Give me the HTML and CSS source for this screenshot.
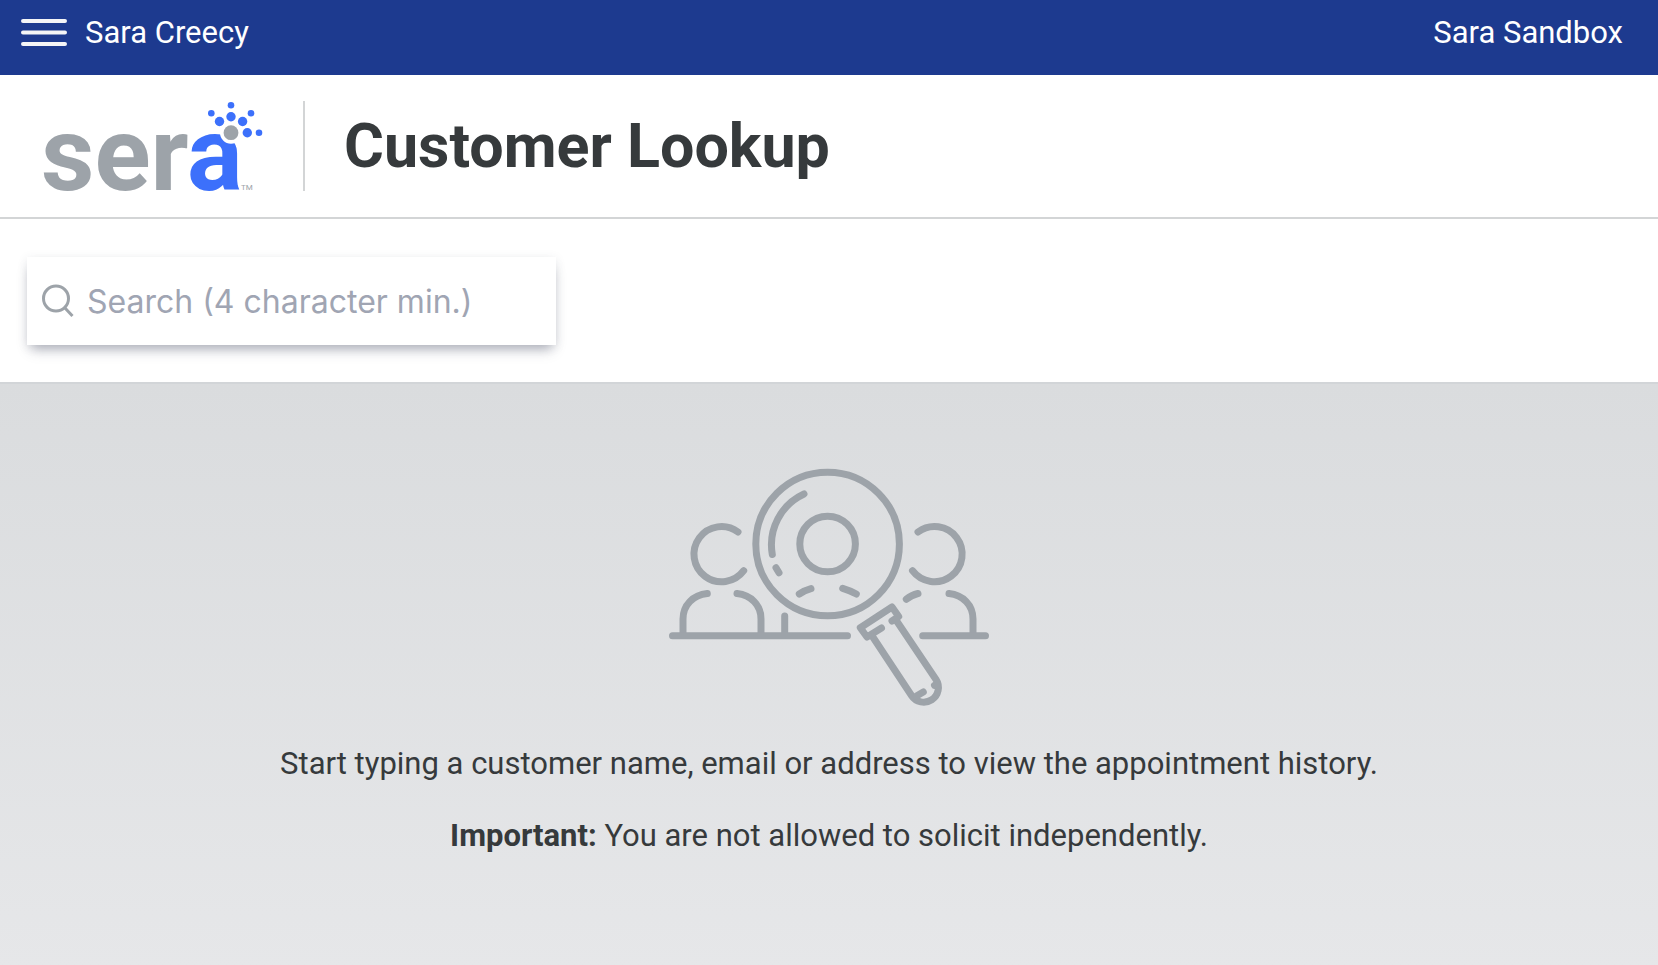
FILE: index.html
```
<!DOCTYPE html>
<html lang="en">

<head>
    <meta charset="UTF-8">
    <meta name="viewport" content="width=device-width, initial-scale=1.0">
    <title>Customer Lookup</title>
    <link rel="stylesheet" href="styles.css">
</head>

<body>
    <nav class="topbar">
        <button class="menu-btn" type="button" aria-label="Menu">
            <svg width="48" height="30" viewBox="0 0 48 30">
                <path d="M3 3H45M3 14.5H45M3 26H45" />
            </svg>
        </button>
        <span class="user">Sara Creecy</span>
        <span class="company">Sara Sandbox</span>
    </nav>

    <header class="page-header">
        <svg class="logo" width="224" height="92" viewBox="42 100 224 92" role="img" aria-label="sera">
            <text class="logo-text" x="41" y="190">ser<tspan class="logo-blue">a</tspan></text>
            <text class="logo-tm" x="241" y="190">TM</text>
            <circle class="ring" cx="231" cy="132.7" r="11" />
            <circle class="dot-grey" cx="231" cy="132.7" r="7.4" />
            <g class="dots">
                <circle cx="231" cy="116.8" r="4.7" />
                <circle cx="219.5" cy="121.5" r="4.7" />
                <circle cx="242.6" cy="121.5" r="4.7" />
                <circle cx="247.3" cy="132.7" r="4.7" />
                <circle cx="231" cy="105.3" r="3.3" />
                <circle cx="211.3" cy="113.3" r="3.3" />
                <circle cx="251" cy="113.3" r="3.3" />
                <circle cx="259" cy="132.7" r="3.3" />
            </g>
        </svg>
        <h1 class="title">Customer Lookup</h1>
    </header>

    <form class="search-section">
        <label class="search-box">
            <svg class="search-icon" width="32" height="34" viewBox="0 0 32 34" aria-hidden="true">
                <circle cx="14" cy="14.5" r="12.5" />
                <path d="M22.5 23.5L30.5 32" />
            </svg>
            <input class="search-input" type="text" aria-label="Search" placeholder="Search (4 character min.)">
        </label>
    </form>

    <main class="results">
        <svg class="lookup-art" width="320" height="244" viewBox="669 464 320 244" aria-hidden="true">
            <!-- person on the left -->
            <path d="M738 531A27.6 27.6 0 1 0 743.7 569.7" />
            <path d="M707.3 592.5C693 594 683 604 683 618V634.5" />
            <path d="M737 592.5C751 594 761 604 761 618V634.5" />
            <!-- person on the right -->
            <path d="M918 531A27.6 27.6 0 1 1 912.5 569.7" />
            <path d="M906.3 598.3Q911.5 594 918 592.5" />
            <path d="M949 592.5C963 594 973 604 973 618V634.5" />
            <!-- ground -->
            <path d="M672.5 634.7H847.5M922.7 634.7H985.5M784.7 615V634.7" />
            <!-- lens -->
            <circle cx="827.6" cy="543" r="71.8" />
            <circle cx="827.6" cy="543" r="27.8" />
            <path d="M804 493A56 56 0 0 0 772.3 553.5M776 566.7L779 571.7" />
            <path d="M799.3 593Q804.5 589.5 811 587.7M842.7 587.3Q850 589.5 856.3 593" />
            <!-- handle -->
            <path d="M881.5 627L867 636L860.3 626.7L892 606L898.7 615.5L892 620" />
            <path d="M872.5 635.5L911.5 694.5A14.4 14.4 0 1 0 936 678.5L896 619" />
            <path d="M916.5 695L923.3 691M934.5 684.3L937 683" />
        </svg>
        <p class="message">Start typing a customer name, email or address to view the appointment history.</p>
        <p class="message"><strong>Important:</strong> You are not allowed to solicit independently.</p>
    </main>
</body>

</html>
```
FILE: styles.css
```
* {
    box-sizing: border-box;
}

body {
    margin: 0;
    min-height: 100vh;
    display: flex;
    flex-direction: column;
    font-family: Roboto, "Liberation Sans", sans-serif;
    font-size: 31px;
    color: #363a3c;
    background: #fff;
}

/* top bar */
.topbar {
    display: flex;
    align-items: center;
    padding: 13px 35px 22px 20px;
    background: #1d3a8f;
    color: #fff;
    line-height: 40px;
}

.menu-btn {
    display: flex;
    padding: 0;
    margin-right: 17px;
    border: none;
    background: none;
    cursor: pointer;
}

.menu-btn svg {
    stroke: #f4f5f7;
    stroke-width: 4;
    stroke-linecap: round;
}

.company {
    margin-left: auto;
}

/* logo and title */
.page-header {
    display: flex;
    align-items: center;
    padding: 25px 42px;
    border-bottom: 2px solid #d3d5d6;
}

.logo {
    flex: none;
    overflow: visible;
}

.logo-text {
    font-size: 104px;
    font-weight: bold;
    fill: #9da3a9;
}

.logo-blue {
    fill: #3c70fb;
}

.logo-tm {
    font-size: 8px;
    fill: #9da3a9;
}

.ring {
    fill: #fff;
}

.dot-grey {
    fill: #9da3a9;
}

.dots {
    fill: #3c70fb;
}

.title {
    margin: 0 0 0 37px;
    padding-left: 39px;
    border-left: 2px solid #d3d5d6;
    font-size: 61px;
    font-weight: bold;
    line-height: 90px;
}

/* search */
.search-section {
    padding: 38px 27px 37px;
}

.search-box {
    display: flex;
    align-items: center;
    max-width: 529px;
    height: 88px;
    padding: 0 15px;
    background: #fff;
    box-shadow: 0 8px 12px -4px rgba(60, 65, 90, 0.4), 0 2px 10px rgba(60, 65, 90, 0.1);
}

.search-icon {
    flex: none;
    fill: none;
    stroke: #9da3a9;
    stroke-width: 3;
}

.search-input {
    flex: 1;
    min-width: 0;
    padding: 0;
    margin-left: 13px;
    border: none;
    outline: none;
    background: none;
    font-family: Inter, "Liberation Sans", sans-serif;
    font-size: 32px;
    color: #363a3c;
}

.search-input::placeholder {
    color: #a0a5b3;
    opacity: 1;
}

/* empty state */
.results {
    flex: 1;
    display: flex;
    flex-direction: column;
    align-items: center;
    padding: 81px 24px;
    border-top: 2px solid #d2d5d8;
    background: linear-gradient(#dadcde, #e6e7e9);
    text-align: center;
}

.lookup-art {
    margin-bottom: 35px;
    fill: none;
    stroke: #9da3a9;
    stroke-width: 7;
    stroke-linecap: round;
    stroke-linejoin: round;
}

.message {
    margin: 0 0 32px;
    line-height: 40px;
}
```
